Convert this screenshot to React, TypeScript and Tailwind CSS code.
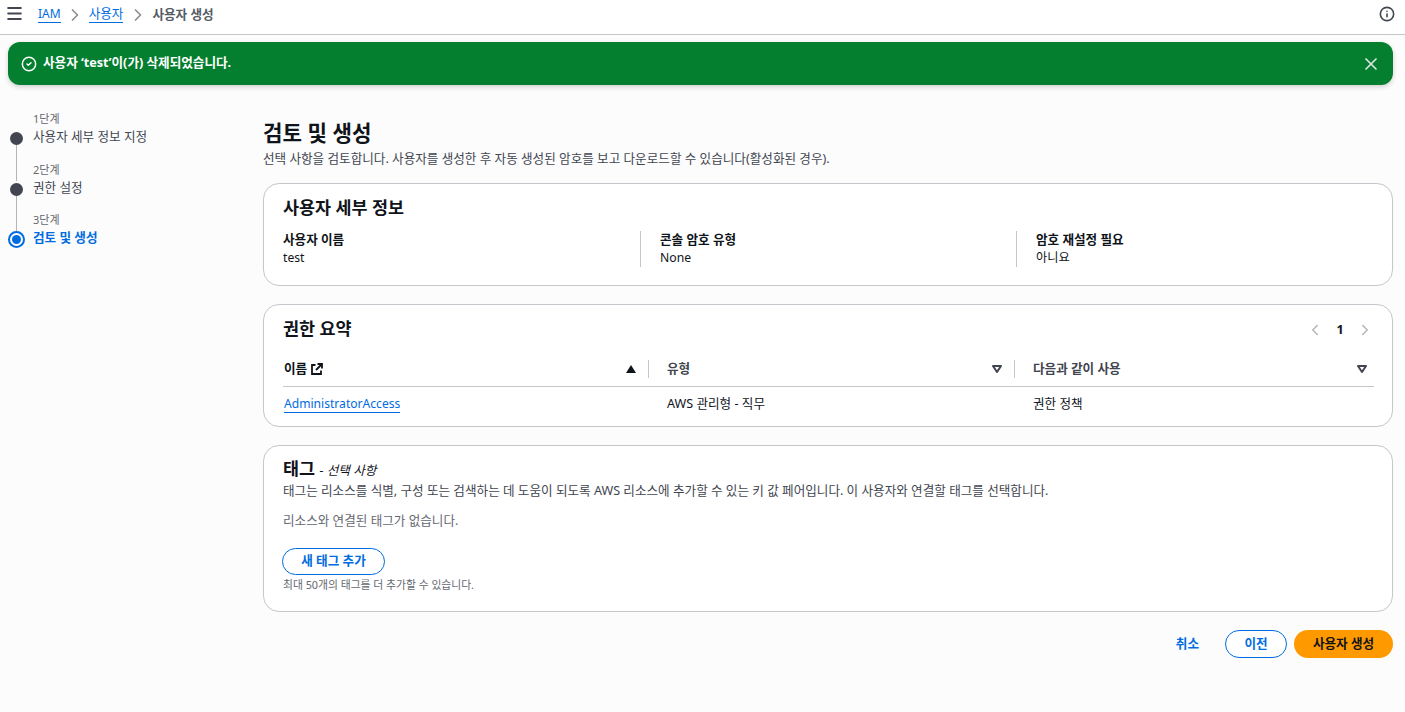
import { CheckCircle2, ChevronLeft, ChevronRight, Info, Menu, X } from "lucide-react";

function SortDown() {
  return (
    <svg width="10" height="8" viewBox="0 0 10 8" className="shrink-0">
      <path d="M1 1h8L5 7z" fill="none" stroke="#424650" strokeWidth="2" strokeLinejoin="round" />
    </svg>
  );
}

function External() {
  return (
    <svg width="12" height="12" viewBox="0 0 12 12" fill="none" stroke="#0f141a" strokeWidth="1.8" className="shrink-0">
      <path d="M4.500 2H1v9h9V7.500" />
      <path d="M6.500 1H11v4.500M11 1 5 7" />
    </svg>
  );
}

function Step({ label, title, active, last }: { label: string; title: string; active?: boolean; last?: boolean }) {
  return (
    <div className="flex h-[50.5px] gap-[9px]">
      <div className="flex w-[16px] flex-col items-center">
        <div className="h-[11px] w-px shrink-0">{label !== "1단계" && <div className="h-full w-px bg-[#b4b4bb]" />}</div>
        {active ? (
          <div className="flex h-[17px] w-[17px] shrink-0 items-center justify-center rounded-full border-2 border-[#006ce0] bg-white">
            <div className="h-[9px] w-[9px] rounded-full bg-[#006ce0]" />
          </div>
        ) : (
          <div className="mt-[2px] h-[13px] w-[13px] shrink-0 rounded-full bg-[#424650]" />
        )}
        {!last && <div className="w-px flex-1 bg-[#b4b4bb]" />}
      </div>
      <div className="-mt-[7px]">
        <div className="text-[11px] leading-[14px] text-[#656871]">{label}</div>
        <div className={active ? "mt-[2px] text-[12.600px] leading-[18px] font-bold text-[#006ce0]" : "mt-[2px] text-[12.600px] leading-[18px] text-[#424650]"}>
          {title}
        </div>
      </div>
    </div>
  );
}

function KeyValue({ label, value, className }: { label: string; value: string; className: string }) {
  return (
    <div className={className}>
      <div className="text-[12.600px] leading-[18px] font-bold text-[#0f141a]">{label}</div>
      <div className="text-[12.200px] leading-[18px] text-[#0f141a]">{value}</div>
    </div>
  );
}

export default function App() {
  return (
    <div
      className="flex h-[712px] w-[1405px] flex-col overflow-hidden bg-[#fcfcfd] text-[#0f141a]"
      style={{ fontFamily: '"Noto Sans", "Noto Sans CJK KR", sans-serif' }}
    >
      {/* Breadcrumbs */}
      <header className="flex h-[35px] shrink-0 items-start justify-between border-b border-[#c6c6cd] bg-white pr-[10px] pl-[5px]">
        <div className="flex h-[29px] items-center">
          <Menu className="h-[19px] w-[19px] -translate-y-px text-[#424650]" strokeWidth={2.4} />
          <a className="ml-[14px] border-b border-[#006ce0] text-[12px] leading-[16px] text-[#006ce0]">IAM</a>
          <ChevronRight className="mx-[4px] h-[20px] w-[20px] text-[#8c8c94]" strokeWidth={2} />
          <a className="border-b border-[#006ce0] text-[12.600px] leading-[16px] text-[#006ce0]">사용자</a>
          <ChevronRight className="mx-[4.500px] h-[20px] w-[20px] text-[#8c8c94]" strokeWidth={2} />
          <span className="text-[12.600px] leading-[16px] font-semibold text-[#545b64]">사용자 생성</span>
        </div>
        <Info className="mt-[6px] h-[16px] w-[16px] text-[#424650]" strokeWidth={2.4} />
      </header>

      {/* Flash */}
      <div className="mt-[7px] mr-[12px] ml-[8px] flex h-[43px] shrink-0 items-center rounded-[12px] bg-[#037f2f] pr-[12px] pl-[13px] text-white shadow-[0_2px_5px_rgba(0,0,0,0.18)]">
        <CheckCircle2 className="h-[16px] w-[16px]" strokeWidth={2.2} />
        <span className="ml-[6px] flex-1 -translate-y-px text-[12.600px] leading-[18px] font-bold">사용자 ‘test’이(가) 삭제되었습니다.</span>
        <X className="h-[20px] w-[20px] text-[#e6e6e6]" strokeWidth={2} />
      </div>

      <div className="flex flex-1 pr-[12px]">
        {/* Steps */}
        <nav className="mt-[34px] w-[263px] shrink-0 pl-[8px]">
          <Step label="1단계" title="사용자 세부 정보 지정" />
          <Step label="2단계" title="권한 설정" />
          <Step label="3단계" title="검토 및 생성" active last />
        </nav>

        {/* Content */}
        <main className="flex-1 pt-[35px]">
          <h1 className="text-[21.200px] leading-[26px] font-bold">검토 및 생성</h1>
          <p className="mt-[4px] text-[12.600px] leading-[18px] text-[#424650]">
            선택 사항을 검토합니다. 사용자를 생성한 후 자동 생성된 암호를 보고 다운로드할 수 있습니다(활성화된 경우).
          </p>

          <section className="mt-[15px] h-[103px] rounded-[16px] border border-[#c6c6cd] bg-white pt-[11px] pr-[19px] pl-[19px]">
            <h2 className="text-[17.400px] leading-[24px] font-bold">사용자 세부 정보</h2>
            <div className="mt-[12px] flex">
              <KeyValue className="w-[357px]" label="사용자 이름" value="test" />
              <KeyValue className="w-[376px] border-l border-[#c6c6cd] pl-[19px]" label="콘솔 암호 유형" value="None" />
              <KeyValue className="flex-1 border-l border-[#c6c6cd] pl-[19px]" label="암호 재설정 필요" value="아니요" />
            </div>
          </section>

          <section className="mt-[18px] h-[123px] rounded-[16px] border border-[#c6c6cd] bg-white pt-[11px] pr-[18px] pl-[19px]">
            <div className="flex items-center justify-between">
              <h2 className="text-[17.400px] leading-[24px] font-bold">권한 요약</h2>
              <div className="flex items-center gap-[10px] pt-[4px]">
                <ChevronLeft className="h-[18px] w-[18px] text-[#b4b4bb]" />
                <span className="w-[12px] text-center text-[12.600px] leading-[16px] font-bold">1</span>
                <ChevronRight className="h-[18px] w-[18px] text-[#b4b4bb]" />
              </div>
            </div>
            <div className="mt-[20px] grid h-[27px] grid-cols-[366px_366px_1fr] items-start border-b border-[#c6c6cd]">
              <div className="flex h-[18px] items-center justify-between border-r border-[#c6c6cd] pr-[12px] pl-[1px]">
                <span className="flex items-center gap-[4px] text-[12.600px] leading-[18px] font-bold">
                  이름 <External />
                </span>
                <svg width="10" height="8" viewBox="0 0 10 8" className="shrink-0">
                  <path d="M5 0l5 8H0z" fill="#0f141a" />
                </svg>
              </div>
              <div className="flex h-[18px] items-center justify-between border-r border-[#c6c6cd] pr-[12px] pl-[18px]">
                <span className="text-[12.600px] leading-[18px] font-bold text-[#424650]">유형</span>
                <SortDown />
              </div>
              <div className="flex h-[18px] items-center justify-between pr-[7px] pl-[18px]">
                <span className="text-[12.600px] leading-[18px] font-bold text-[#424650]">다음과 같이 사용</span>
                <SortDown />
              </div>
            </div>
            <div className="grid grid-cols-[366px_366px_1fr] pt-[8px] text-[12.600px] leading-[18px]">
              <div className="pl-[1px]">
                <a className="border-b border-[#006ce0] text-[12.100px] text-[#006ce0]">AdministratorAccess</a>
              </div>
              <div className="pl-[18px]">AWS 관리형 - 직무</div>
              <div className="pl-[18px]">권한 정책</div>
            </div>
          </section>

          <section className="mt-[18px] h-[167px] rounded-[16px] border border-[#c6c6cd] bg-white pt-[10px] pr-[19px] pl-[19px]">
            <h2 className="h-[24px] text-[17.400px] leading-[24px] font-bold">
              태그 <span className="text-[12.600px] font-normal italic">- 선택 사항</span>
            </h2>
            <p className="mt-[2px] text-[12.600px] leading-[18px] text-[#424650]">
              태그는 리소스를 식별, 구성 또는 검색하는 데 도움이 되도록 AWS 리소스에 추가할 수 있는 키 값 페어입니다. 이 사용자와 연결할 태그를 선택합니다.
            </p>
            <p className="mt-[12px] text-[12.600px] leading-[18px] text-[#656871]">리소스와 연결된 태그가 없습니다.</p>
            <button className="mt-[18px] -ml-px block h-[27px] w-[103px] rounded-full border border-[#006ce0] bg-white text-[12.600px] font-bold text-[#006ce0]">
              새 태그 추가
            </button>
            <p className="mt-[2px] text-[10.800px] leading-[16px] text-[#656871]">최대 50개의 태그를 더 추가할 수 있습니다.</p>
          </section>

          <div className="mt-[18px] flex items-center justify-end">
            <button className="mr-[26px] text-[12.600px] font-bold text-[#006ce0]">취소</button>
            <button className="h-[28px] w-[62px] rounded-full border border-[#006ce0] bg-white text-[12.600px] font-bold text-[#006ce0]">
              이전
            </button>
            <button className="ml-[7px] h-[28px] w-[99px] rounded-full bg-[#ff9900] text-[12.600px] font-bold text-[#0f141a]">
              사용자 생성
            </button>
          </div>
        </main>
      </div>
    </div>
  );
}
